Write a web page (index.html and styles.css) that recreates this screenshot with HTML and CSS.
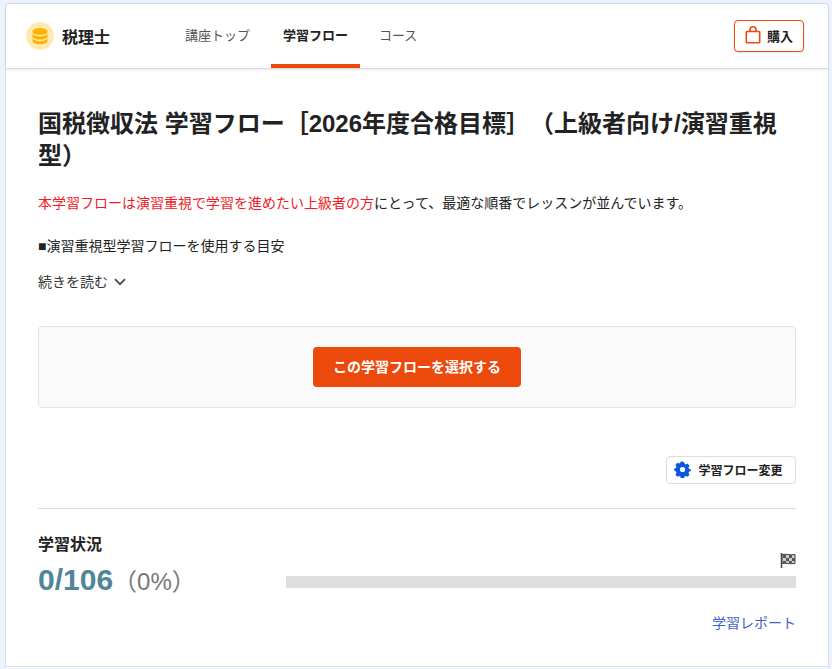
FILE: index.html
```html
<!DOCTYPE html>
<html lang="ja">
<head>
<meta charset="utf-8">
<title>税理士 学習フロー</title>
<link rel="stylesheet" href="styles.css">
</head>
<body>
<div class="card">
  <header class="topbar">
    <div class="brand">
      <span class="brand-icon">
        <svg viewBox="0 0 28 28" width="28" height="28" aria-hidden="true">
          <circle cx="14" cy="14" r="14" fill="#ffe9b3"/>
          <ellipse cx="14" cy="9.500" rx="7.500" ry="3.600" fill="#ffb300"/>
          <path d="M6.500 11.600c1 2 4 3 7.500 3s6.500-1 7.500-3v2.600c0 2-3.400 3.400-7.500 3.400s-7.500-1.400-7.500-3.400z" fill="#ffb300"/>
          <path d="M6.500 16.300c1 2 4 3 7.500 3s6.500-1 7.500-3v2.400c0 2-3.400 3.500-7.500 3.500s-7.500-1.500-7.500-3.500z" fill="#ffb300"/>
        </svg>
      </span>
      <span class="brand-name">税理士</span>
    </div>
    <nav class="tabs">
      <a class="tab">講座トップ</a>
      <a class="tab tab-active">学習フロー</a>
      <a class="tab">コース</a>
    </nav>
    <button class="buy">
      <svg viewBox="0 0 16 18" width="16" height="18" aria-hidden="true">
        <path d="M2 5.500h12a.7.7 0 0 1 .7.700V16a.7.700 0 0 1-.7.700H2a.7.700 0 0 1-.7-.700V6.200a.7.700 0 0 1 .7-.700z" fill="none" stroke="#eb4a0c" stroke-width="1.600"/>
        <path d="M5 5.500V3.800a3 3 0 0 1 6 0V5.500" fill="none" stroke="#eb4a0c" stroke-width="1.600"/>
      </svg>
      <span>購入</span>
    </button>
  </header>
  <main class="content">
    <h1 class="title">国税徴収法 学習フロー［2026年度合格目標］（上級者向け/演習重視型）</h1>
    <p class="lead"><span class="red">本学習フローは演習重視で学習を進めたい上級者の方</span>にとって、最適な順番でレッスンが並んでいます。</p>
    <p class="guide">■演習重視型学習フローを使用する目安</p>
    <a class="more">続きを読む
      <svg viewBox="0 0 12 8" width="12" height="8" aria-hidden="true"><path d="M1 1.200l5 5 5-5" fill="none" stroke="#4a4a55" stroke-width="1.800"/></svg>
    </a>
    <section class="select-box">
      <button class="select-btn">この学習フローを選択する</button>
    </section>
    <div class="change-row">
      <button class="change-btn">
        <svg viewBox="0 0 24 24" width="17" height="17" aria-hidden="true"><path fill-rule="evenodd" fill="#0b57e0" d="M12 1l2.200.3.800 2.700 1.700.8 2.500-1.100 2.700 3-1.400 2.400.6 1.800 2.700 1.100-.1 2-2.600 1.100-.6 1.800 1.400 2.400-2.700 3-2.500-1.100-1.700.8-.8 2.700h-4.400l-.8-2.700-1.700-.8-2.500 1.100-2.700-3 1.400-2.400-.6-1.800L.2 12.900l-.1-2 2.700-1.100.6-1.800-1.400-2.400 2.700-3 2.500 1.100 1.700-.8.800-2.700zM12 8.300a3.700 3.700 0 1 0 0 7.400 3.700 3.700 0 0 0 0-7.400z"/></svg>
        <span>学習フロー変更</span>
      </button>
    </div>
    <hr class="rule">
    <section class="status">
      <div class="status-left">
        <h2 class="status-title">学習状況</h2>
        <div class="count"><b>0/106</b><span>（0%）</span></div>
      </div>
      <div class="progress">
        <svg class="flag" viewBox="0 0 16 16" width="16" height="16" aria-hidden="true">
          <path d="M1.500 1v15" stroke="#444" stroke-width="1.500"/>
          <path d="M2 2.500c4-1 8 1 13 0v9c-5 1-9-1-13 0z" fill="#ccc" stroke="#444"/>
          <path d="M3 3h3v3H3zM9 3h3v3H9zM6 6h3v3H6zM12 6h3v3h-3zM3 9h3v2H3zM9 9h3v2H9z" fill="#555"/>
        </svg>
        <div class="bar"></div>
      </div>
    </section>
    <div class="report-row"><a class="report">学習レポート</a></div>
  </main>
  <hr class="bottom-rule">
</div>
</body>
</html>
```

FILE: styles.css
```css
* { box-sizing: border-box; }
html, body { margin: 0; height: 100%; overflow: hidden; }
body {
  background: #ecf3fe;
  padding: 3px 3px 0 5px;
  font-family: "Liberation Sans", "Noto Sans CJK JP", sans-serif;
  color: #222;
  font-size: 14px;
  text-spacing-trim: space-all;
}
.card {
  background: #fff;
  border: 1px solid #d9dde6;
  border-bottom: 0;
  border-radius: 4px 4px 0 0;
  height: 665px;
}
.topbar {
  display: flex;
  align-items: center;
  height: 65px;
  padding: 0 24px 0 20px;
  border-bottom: 1px solid #d5d9e2;
  box-shadow: 0 1px 3px rgba(0,0,0,.08);
}
.brand { display: flex; align-items: center; gap: 8px; width: 147px; flex: none; }
.brand-icon { display: flex; }
.brand-name { font-size: 16px; font-weight: 700; color: #222; }
.tabs { display: flex; align-self: stretch; flex: 1; gap: 7px; }
.tab {
  display: flex;
  align-items: center;
  justify-content: center;
  height: 64px;
  padding: 0 12px 4px;
  font-size: 13px;
  color: #555;
}
.tab:first-child { width: 91px; padding-right: 14px; }
.tab-active {
  width: 89px;
  font-weight: 700;
  color: #222;
  border-bottom: 4px solid #eb4a0c;
  padding-bottom: 0;
}
.buy {
  display: flex;
  align-items: center;
  justify-content: center;
  gap: 6px;
  width: 70px;
  height: 32px;
  padding: 0 0 2px;
  background: #fff;
  border: 1px solid #eb4a0c;
  border-radius: 4px;
  box-shadow: 0 1px 2px rgba(0,0,0,.1);
  font: 700 13px "Liberation Sans", "Noto Sans CJK JP", sans-serif;
  color: #222;
}
.content { padding: 39px 32px 0; }
.title {
  margin: 0;
  font-size: 24px;
  line-height: 32px;
  font-weight: 700;
  color: #222;
}
.lead { margin: 19px 0 0; font-size: 14px; line-height: 24px; }
.red { color: #f01a28; }
.guide { margin: 19px 0 0; font-size: 14px; line-height: 24px; }
.more { display: flex; align-items: center; gap: 6px; margin-top: 12px; font-size: 14px; line-height: 24px; color: #333; }
.select-box {
  display: flex;
  justify-content: center;
  align-items: center;
  height: 82px;
  margin-top: 32px;
  background: #fafafa;
  border: 1px solid #e1e3e8;
  border-radius: 4px;
}
.select-btn {
  width: 208px;
  height: 40px;
  padding: 0 0 2px;
  border: 0;
  border-radius: 4px;
  background: #eb4a0c;
  color: #fff;
  font: 700 14px "Liberation Sans", "Noto Sans CJK JP", sans-serif;
}
.change-row { display: flex; justify-content: flex-end; margin-top: 48px; }
.change-btn {
  display: flex;
  align-items: center;
  justify-content: center;
  gap: 7px;
  width: 130px;
  height: 28px;
  padding: 0 5px 2px 0;
  background: #fff;
  border: 1px solid #d9dde6;
  border-radius: 4px;
  font: 700 12px "Liberation Sans", "Noto Sans CJK JP", sans-serif;
  color: #222;
}
.rule { margin: 24px 0 0; border: 0; border-top: 1px solid #d9dde6; }
.status { display: flex; justify-content: space-between; margin-top: 26px; }
.status-left { width: 248px; flex: none; }
.status-title { margin: 0; font-size: 16px; line-height: 20px; font-weight: 700; color: #222; }
.count { display: flex; align-items: baseline; margin-top: 8px; line-height: 34px; }
.count b { font-size: 30px; color: #4f8699; }
.count span { font-size: 24px; color: #777; }
.progress { flex: 1; display: flex; flex-direction: column; align-items: flex-end; padding-top: 17px; }
.flag { display: block; }
.bar { width: 100%; height: 12px; background: #dedede; margin-top: 8px; }
.report-row { display: flex; justify-content: flex-end; margin-top: 14px; }
.report { font-size: 14px; line-height: 20px; color: #3f5fc4; }
.bottom-rule { margin: 33px 0 0; border: 0; border-top: 1px solid #d9dde6; }
```
